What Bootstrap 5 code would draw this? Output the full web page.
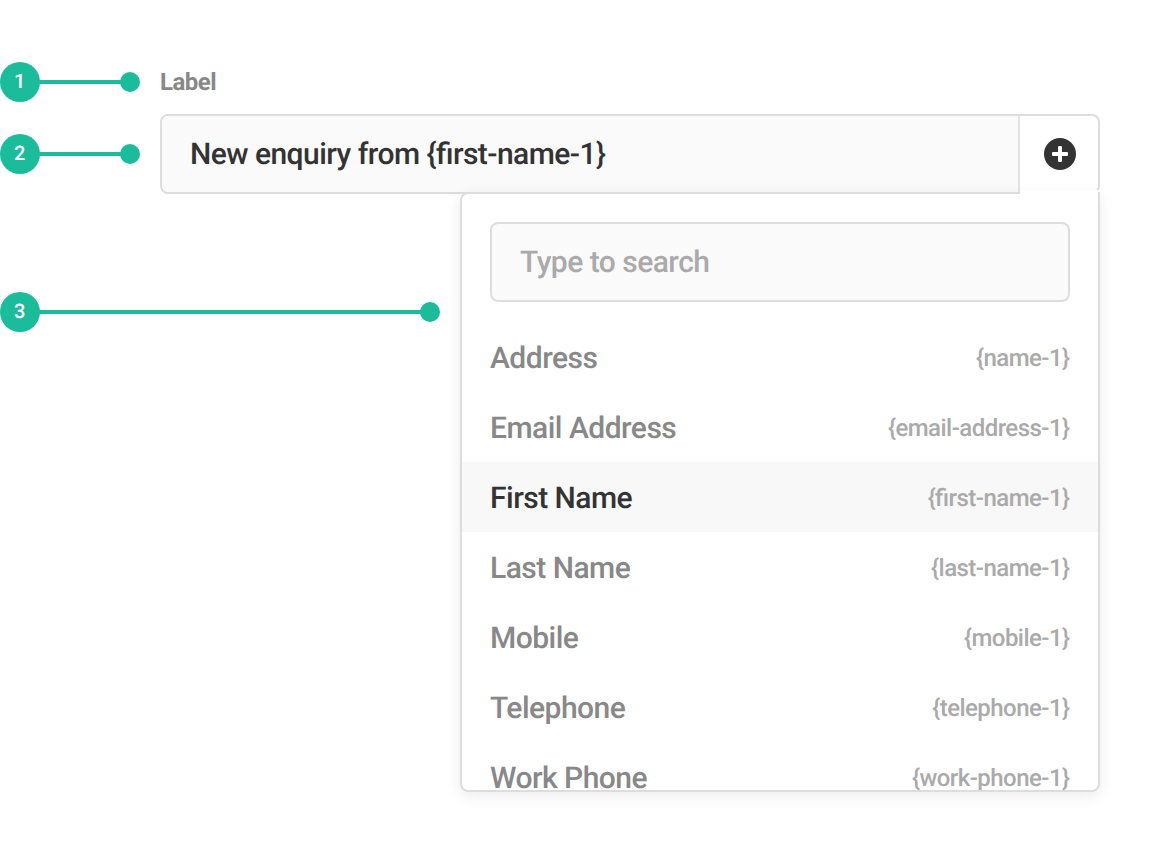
<!DOCTYPE html>
<html lang="en">
<head>
<meta charset="utf-8">
<meta name="viewport" content="width=device-width, initial-scale=1">
<title>Label field</title>
<link href="https://cdn.jsdelivr.net/npm/bootstrap@5.3.0/dist/css/bootstrap.min.css" rel="stylesheet">
<style>
body{font-family:Roboto,sans-serif;font-weight:500;background:#fff;color:#333;height:852px;overflow:hidden;text-rendering:geometricPrecision;letter-spacing:-.52px;font-feature-settings:"liga" 1}
.guides{width:160px;padding-top:62px}
.guide{height:40px;color:#fff;font-size:20px}
.guide+.guide{margin-top:32px}
.guide.near{width:140px}
.guides .far{margin-top:118px;width:440px}
.num{width:40px;height:40px;background:#1abc9c;line-height:1;padding:0 1px 2px 0}
.line{height:4px;background:#1abc9c;margin:0 -1px}
.dot{width:20px;height:20px;background:#1abc9c}
.editor{width:940px;padding-top:64px}
.caption{font-size:24px;line-height:36px;color:#888;margin-bottom:14px;font-weight:700;letter-spacing:-.5px}
.field{height:80px;border:2px solid #ddd;border-radius:8px;background:#fff}
.value{background:#fafafa;border-right:2px solid #e4e4e4;font-size:30px;padding:0 28px;border-radius:6px 0 0 6px;letter-spacing:-.54px}
.adder{width:78px;padding-left:2px}
.picker{top:192px;left:460px;width:640px;height:600px;border:2px solid #ddd;border-radius:8px 0 8px 8px;background:#fff;box-shadow:0 4px 16px rgba(0,0,0,.08)}
.joint{top:190px;left:1020px;width:78px;height:4px;background:#fff}
.notch{top:190px;left:1098px;width:2px;height:2px;background:#fafafa}
.search{height:80px;margin:28px 28px 20px;border:2px solid #ddd;border-radius:8px;background:#fafafa;font-size:30px;color:#aaa;padding:0 28px}
.choice{height:70px;padding:2px 28px 0;font-size:30px;color:#888}
.choice .tag{font-size:24px;color:#aaa;padding-right:.5px;letter-spacing:-.54px}
.choice.chosen{background:#f8f8f8;color:#333}
</style>
</head>
<body>
<main class="d-flex position-relative">
<div class="guides flex-shrink-0">
<div class="guide near d-flex align-items-center"><span class="num rounded-circle d-flex align-items-center justify-content-center">1</span><span class="line flex-grow-1"></span><span class="dot rounded-circle"></span></div>
<div class="guide near d-flex align-items-center"><span class="num rounded-circle d-flex align-items-center justify-content-center">2</span><span class="line flex-grow-1"></span><span class="dot rounded-circle"></span></div>
<div class="guide far d-flex align-items-center"><span class="num rounded-circle d-flex align-items-center justify-content-center">3</span><span class="line flex-grow-1"></span><span class="dot rounded-circle"></span></div>
</div>
<div class="editor">
<div class="caption">Label</div>
<div class="field d-flex">
<div class="value flex-grow-1 d-flex align-items-center">New enquiry from {first-name-1}</div>
<div class="adder d-flex align-items-center justify-content-center"><svg width="32" height="32" viewBox="0 0 32 32"><circle cx="16" cy="16" r="16" fill="#333"/><rect x="14" y="8" width="4" height="16" rx="1" fill="#fff"/><rect x="8" y="14" width="16" height="4" rx="1" fill="#fff"/></svg></div>
</div>
</div>
<div class="picker position-absolute overflow-hidden">
<div class="search d-flex align-items-center">Type to search</div>
<div class="choice d-flex align-items-center justify-content-between"><span>Address</span><span class="tag">{name-1}</span></div>
<div class="choice d-flex align-items-center justify-content-between"><span>Email Address</span><span class="tag">{email-address-1}</span></div>
<div class="choice chosen d-flex align-items-center justify-content-between"><span>First Name</span><span class="tag">{first-name-1}</span></div>
<div class="choice d-flex align-items-center justify-content-between"><span>Last Name</span><span class="tag">{last-name-1}</span></div>
<div class="choice d-flex align-items-center justify-content-between"><span>Mobile</span><span class="tag">{mobile-1}</span></div>
<div class="choice d-flex align-items-center justify-content-between"><span>Telephone</span><span class="tag">{telephone-1}</span></div>
<div class="choice d-flex align-items-center justify-content-between"><span>Work Phone</span><span class="tag">{work-phone-1}</span></div>
</div>
<div class="joint position-absolute"></div>
<div class="notch position-absolute"></div>
</main>
</body>
</html>
